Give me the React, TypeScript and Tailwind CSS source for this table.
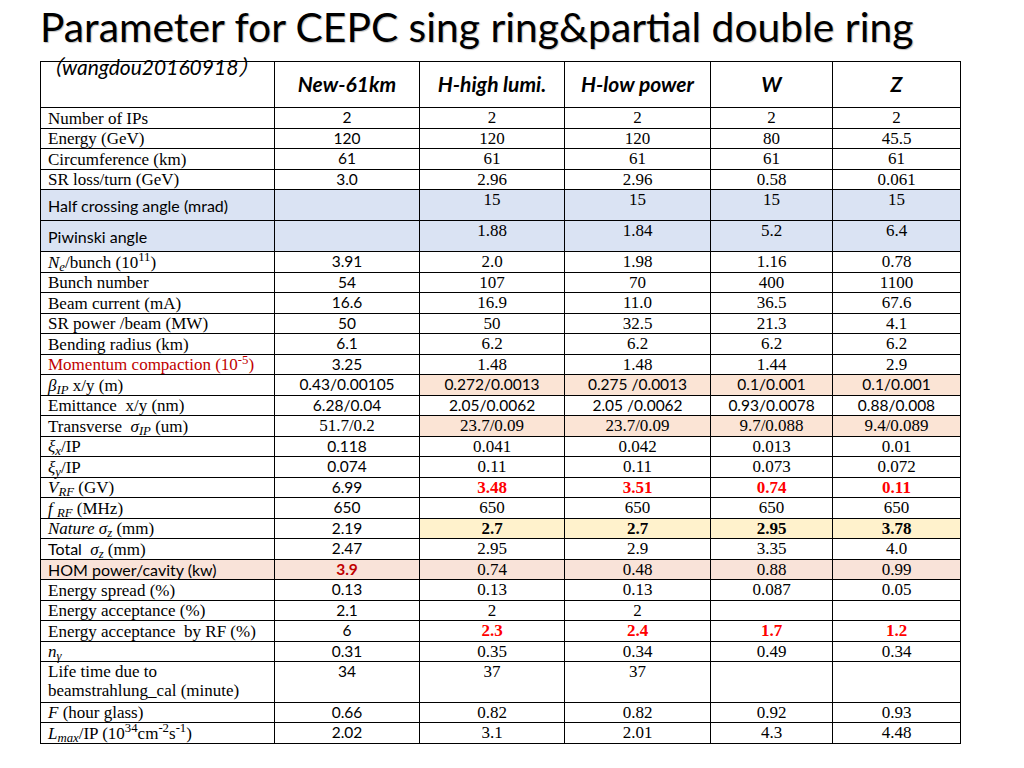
import React from 'react';

type Cell = { t: React.ReactNode; s?: boolean; b?: boolean; r?: 'r' | 'd'; bg?: string };
type Row = {
  label: React.ReactNode;
  ls?: boolean;
  lred?: boolean;
  h: string;
  rowBg?: string;
  top?: boolean;
  vals: Cell[];
};

const SERIF = "font-['Liberation_Serif','Times_New_Roman',serif] text-[17px]";
const SANS = "font-['Lato','Noto_Sans',sans-serif] text-[15.5px]";
const SANS_L = "font-['Lato','Noto_Sans',sans-serif] text-[16px]";

const n = (t: React.ReactNode, extra: Partial<Cell> = {}): Cell => ({ t, ...extra });
const s = (t: React.ReactNode, extra: Partial<Cell> = {}): Cell => ({ t, s: true, ...extra });

const PEACH = 'bg-[#fbe4d5]';
const YELLOW = 'bg-[#fff2cc]';
const BLUE = 'bg-[#dae3f3]';
const HOM = 'bg-[#f9e3d9]';

const rows: Row[] = [
  { label: 'Number of IPs', h: 'h-[21px]', vals: [s('2'), n('2'), n('2'), n('2'), n('2')] },
  { label: 'Energy (GeV)', h: 'h-[20px]', vals: [s('120'), n('120'), n('120'), n('80'), n('45.5')] },
  { label: 'Circumference (km)', h: 'h-[21px]', vals: [s('61'), n('61'), n('61'), n('61'), n('61')] },
  { label: 'SR loss/turn (GeV)', h: 'h-[20px]', vals: [s('3.0'), n('2.96'), n('2.96'), n('0.58'), n('0.061')] },
  {
    label: 'Half crossing angle (mrad)',
    ls: true,
    h: 'h-[31px]',
    rowBg: BLUE,
    vals: [n(''), n('15'), n('15'), n('15'), n('15')],
  },
  {
    label: 'Piwinski angle',
    ls: true,
    h: 'h-[31px]',
    rowBg: BLUE,
    vals: [n(''), n('1.88'), n('1.84'), n('5.2'), n('6.4')],
  },
  {
    label: (
      <>
        <i>N</i>
        <sub className="italic">e</sub>/bunch (10<sup>11</sup>)
      </>
    ),
    h: 'h-[21px]',
    vals: [s('3.91'), n('2.0'), n('1.98'), n('1.16'), n('0.78')],
  },
  { label: 'Bunch number', h: 'h-[20px]', vals: [s('54'), n('107'), n('70'), n('400'), n('1100')] },
  { label: 'Beam current (mA)', h: 'h-[21px]', vals: [s('16.6'), n('16.9'), n('11.0'), n('36.5'), n('67.6')] },
  { label: 'SR power /beam (MW)', h: 'h-[20px]', vals: [s('50'), n('50'), n('32.5'), n('21.3'), n('4.1')] },
  { label: 'Bending radius (km)', h: 'h-[21px]', vals: [s('6.1'), n('6.2'), n('6.2'), n('6.2'), n('6.2')] },
  {
    label: (
      <>
        Momentum compaction (10<sup>-5</sup>)
      </>
    ),
    lred: true,
    h: 'h-[20px]',
    vals: [s('3.25'), n('1.48'), n('1.48'), n('1.44'), n('2.9')],
  },
  {
    label: (
      <>
        <i>β</i>
        <sub className="italic">IP</sub> x/y (m)
      </>
    ),
    h: 'h-[21px]',
    vals: [
      s('0.43/0.00105'),
      s('0.272/0.0013', { bg: PEACH }),
      s('0.275 /0.0013', { bg: PEACH }),
      s('0.1/0.001', { bg: PEACH }),
      s('0.1/0.001', { bg: PEACH }),
    ],
  },
  {
    label: <>Emittance&nbsp; x/y (nm)</>,
    h: 'h-[20px]',
    vals: [s('6.28/0.04'), s('2.05/0.0062'), s('2.05 /0.0062'), s('0.93/0.0078'), s('0.88/0.008')],
  },
  {
    label: (
      <>
        Transverse&nbsp; <i>σ</i>
        <sub className="italic">IP</sub> (um)
      </>
    ),
    h: 'h-[21px]',
    vals: [
      n('51.7/0.2'),
      n('23.7/0.09', { bg: PEACH }),
      n('23.7/0.09', { bg: PEACH }),
      n('9.7/0.088', { bg: PEACH }),
      n('9.4/0.089', { bg: PEACH }),
    ],
  },
  {
    label: (
      <>
        <i>ξ</i>
        <sub className="italic">x</sub>/IP
      </>
    ),
    h: 'h-[20px]',
    vals: [s('0.118'), n('0.041'), n('0.042'), n('0.013'), n('0.01')],
  },
  {
    label: (
      <>
        <i>ξ</i>
        <sub className="italic">y</sub>/IP
      </>
    ),
    h: 'h-[21px]',
    vals: [s('0.074'), n('0.11'), n('0.11'), n('0.073'), n('0.072')],
  },
  {
    label: (
      <>
        <i>V</i>
        <sub className="italic">RF</sub> (GV)
      </>
    ),
    h: 'h-[20px]',
    vals: [
      s('6.99'),
      n('3.48', { b: true, r: 'r' }),
      n('3.51', { b: true, r: 'r' }),
      n('0.74', { b: true, r: 'r' }),
      n('0.11', { b: true, r: 'r' }),
    ],
  },
  {
    label: (
      <>
        <i>f</i> <sub className="italic">RF</sub> (MHz)
      </>
    ),
    h: 'h-[21px]',
    vals: [s('650'), n('650'), n('650'), n('650'), n('650')],
  },
  {
    label: (
      <>
        <i>Nature</i> <i>σ</i>
        <sub className="italic">z</sub> (mm)
      </>
    ),
    h: 'h-[20px]',
    vals: [
      s('2.19'),
      n('2.7', { b: true, bg: YELLOW }),
      n('2.7', { b: true, bg: YELLOW }),
      n('2.95', { b: true, bg: YELLOW }),
      n('3.78', { b: true, bg: YELLOW }),
    ],
  },
  {
    label: (
      <>
        <span className={SANS_L}>Total&nbsp;</span> <i>σ</i>
        <sub className="italic">z</sub> (mm)
      </>
    ),
    h: 'h-[21px]',
    vals: [s('2.47'), n('2.95'), n('2.9'), n('3.35'), n('4.0')],
  },
  {
    label: 'HOM power/cavity (kw)',
    ls: true,
    h: 'h-[20px]',
    rowBg: HOM,
    vals: [s('3.9', { b: true, r: 'd' }), n('0.74'), n('0.48'), n('0.88'), n('0.99')],
  },
  { label: 'Energy spread (%)', h: 'h-[21px]', vals: [s('0.13'), n('0.13'), n('0.13'), n('0.087'), n('0.05')] },
  { label: 'Energy acceptance (%)', h: 'h-[20px]', vals: [s('2.1'), n('2'), n('2'), n(''), n('')] },
  {
    label: <>Energy acceptance&nbsp; by RF (%)</>,
    h: 'h-[21px]',
    vals: [
      s('6'),
      n('2.3', { b: true, r: 'r' }),
      n('2.4', { b: true, r: 'r' }),
      n('1.7', { b: true, r: 'r' }),
      n('1.2', { b: true, r: 'r' }),
    ],
  },
  {
    label: (
      <>
        <i>n</i>
        <sub className="italic">γ</sub>
      </>
    ),
    h: 'h-[20px]',
    vals: [s('0.31'), n('0.35'), n('0.34'), n('0.49'), n('0.34')],
  },
  {
    label: (
      <>
        Life time due to
        <br />
        beamstrahlung_cal (minute)
      </>
    ),
    h: 'h-[41px]',
    top: true,
    vals: [s('34'), n('37'), n('37'), n(''), n('')],
  },
  {
    label: (
      <>
        <i>F</i> (hour glass)
      </>
    ),
    h: 'h-[20px]',
    vals: [s('0.66'), n('0.82'), n('0.82'), n('0.92'), n('0.93')],
  },
  {
    label: (
      <>
        <i>L</i>
        <sub className="italic">max</sub>/IP (10<sup>34</sup>cm<sup>-2</sup>s<sup>-1</sup>)
      </>
    ),
    h: 'h-[21px]',
    vals: [s('2.02'), n('3.1'), n('2.01'), n('4.3'), n('4.48')],
  },
];

const headers = ['New-61km', 'H-high lumi.', 'H-low power', 'W', 'Z'];

export default function App() {
  return (
    <div className="w-[1024px] h-[768px] bg-white overflow-hidden text-black">
      <div className="h-[61px] pl-[40px] pt-[7px]">
        <h1 className="font-['Lato','Noto_Sans',sans-serif] text-[40.8px] leading-none text-black whitespace-nowrap [text-shadow:1px_1px_1px_rgba(0,0,0,0.25)]">
          Parameter for CEPC sing ring&amp;partial double ring
        </h1>
      </div>
      <table className="ml-[40px] w-[920px] table-fixed border-collapse border border-black">
        <colgroup>
          <col className="w-[234px]" />
          <col className="w-[145px]" />
          <col className="w-[145px]" />
          <col className="w-[146px]" />
          <col className="w-[122px]" />
          <col className="w-[128px]" />
        </colgroup>
        <thead>
          <tr className="h-[46px]">
            <th className="relative border border-black p-0 align-top">
              <span className="absolute left-[0px] top-[-6px] whitespace-nowrap font-['Lato','Noto_Sans_CJK_SC',sans-serif] text-[21px] italic font-normal leading-none">
                （wangdou20160918）
              </span>
            </th>
            {headers.map((h) => (
              <th
                key={h}
                className="border border-black p-0 pb-[1px] text-center align-middle font-['Lato','Noto_Sans',sans-serif] text-[21px] font-bold italic"
              >
                {h}
              </th>
            ))}
          </tr>
        </thead>
        <tbody>
          {rows.map((row, i) => (
            <tr key={i} className={`${row.h} ${row.rowBg ?? ''}`}>
              <td
                className={`border border-black p-0 pl-[7px] leading-[19px] whitespace-nowrap ${
                  row.top ? 'align-top' : 'align-middle'
                } ${row.ls ? SANS_L : SERIF} ${row.lred ? 'text-[#c00000]' : ''}`}
              >
                {row.label}
              </td>
              {row.vals.map((c, j) => (
                <td
                  key={j}
                  className={`border border-black p-0 text-center align-top leading-[19px] whitespace-nowrap ${
                    c.s ? SANS : SERIF
                  } ${c.b ? 'font-bold' : ''} ${
                    c.r === 'r' ? 'text-[#ff0000]' : c.r === 'd' ? 'text-[#c00000]' : ''
                  } ${c.bg ?? ''}`}
                >
                  {c.t}
                </td>
              ))}
            </tr>
          ))}
        </tbody>
      </table>
    </div>
  );
}
